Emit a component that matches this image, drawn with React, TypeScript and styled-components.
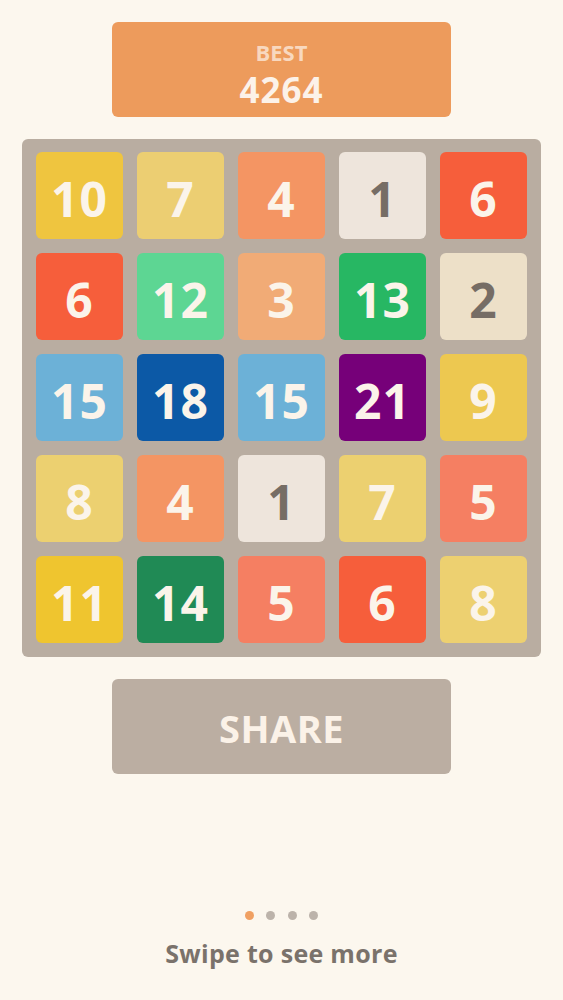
import React from "react";
import styled, { createGlobalStyle } from "styled-components";

const GlobalStyle = createGlobalStyle`
  html, body {
    margin: 0;
    padding: 0;
    background: #fcf7ee;
  }
  body {
    font-family: "Open Sans", "Noto Sans", sans-serif;
  }
`;

type TileData = { value: number; bg: string; dark?: boolean };

const board: TileData[][] = [
  [
    { value: 10, bg: "#efc53f" },
    { value: 7, bg: "#ecce72" },
    { value: 4, bg: "#f49563" },
    { value: 1, bg: "#eee5dc", dark: true },
    { value: 6, bg: "#f65e3b" },
  ],
  [
    { value: 6, bg: "#f65e3b" },
    { value: 12, bg: "#5dd693" },
    { value: 3, bg: "#f1ab76" },
    { value: 13, bg: "#27b763" },
    { value: 2, bg: "#ede0c8", dark: true },
  ],
  [
    { value: 15, bg: "#6cb1d7" },
    { value: 18, bg: "#0c59a6" },
    { value: 15, bg: "#6cb1d7" },
    { value: 21, bg: "#760079" },
    { value: 9, bg: "#edc850" },
  ],
  [
    { value: 8, bg: "#ecd070" },
    { value: 4, bg: "#f49563" },
    { value: 1, bg: "#eee5dc", dark: true },
    { value: 7, bg: "#ecd070" },
    { value: 5, bg: "#f57f62" },
  ],
  [
    { value: 11, bg: "#efc52f" },
    { value: 14, bg: "#208a55" },
    { value: 5, bg: "#f57f62" },
    { value: 6, bg: "#f65e3b" },
    { value: 8, bg: "#edd070" },
  ],
];

const Page = styled.div`
  display: flex;
  flex-direction: column;
  align-items: center;
  padding-top: 22px;
  min-height: 1000px;
  box-sizing: border-box;
`;

const BestBox = styled.div`
  width: 339px;
  height: 95px;
  box-sizing: border-box;
  border-radius: 6px;
  background: #ed9b5c;
  display: flex;
  flex-direction: column;
  align-items: center;
  padding-top: 16px;
`;

const BestLabel = styled.div`
  font-size: 22px;
  font-weight: 700;
  line-height: 28px;
  color: #f8d8bf;
`;

const BestValue = styled.div`
  margin-top: 4px;
  font-size: 35px;
  font-weight: 700;
  line-height: 40px;
  color: #fcf2e9;
  letter-spacing: 1px;
`;

const Board = styled.div`
  margin-top: 22px;
  width: 519px;
  box-sizing: border-box;
  padding: 13px 14px 14px;
  background: #b9ada1;
  border-radius: 6px;
  display: grid;
  grid-template-columns: repeat(5, 87px);
  grid-auto-rows: 87px;
  gap: 14px;
`;

const Tile = styled.div<{ $bg: string; $dark?: boolean }>`
  border-radius: 6px;
  background: ${(p) => p.$bg};
  color: ${(p) => (p.$dark ? "#766d65" : "#fbf4ea")};
  display: flex;
  align-items: center;
  justify-content: center;
  font-size: 48px;
  font-weight: 700;
  line-height: 1;
  letter-spacing: 1px;
  padding-top: 6px;
  box-sizing: border-box;
`;

const ShareButton = styled.button`
  margin-top: 22px;
  width: 339px;
  height: 95px;
  border: none;
  border-radius: 6px;
  background: #bbaea2;
  color: #fbf2e8;
  font-family: "Open Sans", "Noto Sans", sans-serif;
  font-size: 38px;
  font-weight: 700;
  letter-spacing: 0.5px;
  padding: 2px 0 0;
`;

const Dots = styled.div`
  margin-top: 137px;
  display: flex;
  gap: 12.5px;
`;

const Dot = styled.span<{ $active?: boolean }>`
  width: 9px;
  height: 9px;
  border-radius: 50%;
  background: ${(p) => (p.$active ? "#f0a062" : "#bcb3aa")};
`;

const Hint = styled.div`
  margin-top: 16px;
  font-size: 25px;
  font-weight: 700;
  color: #7a726b;
  letter-spacing: 0.3px;
`;

export default function App() {
  return (
    <>
      <GlobalStyle />
      <Page>
        <BestBox>
          <BestLabel>BEST</BestLabel>
          <BestValue>4264</BestValue>
        </BestBox>
        <Board>
          {board.flat().map((t, i) => (
            <Tile key={i} $bg={t.bg} $dark={t.dark}>
              {t.value}
            </Tile>
          ))}
        </Board>
        <ShareButton>SHARE</ShareButton>
        <Dots>
          <Dot $active />
          <Dot />
          <Dot />
          <Dot />
        </Dots>
        <Hint>Swipe to see more</Hint>
      </Page>
    </>
  );
}
